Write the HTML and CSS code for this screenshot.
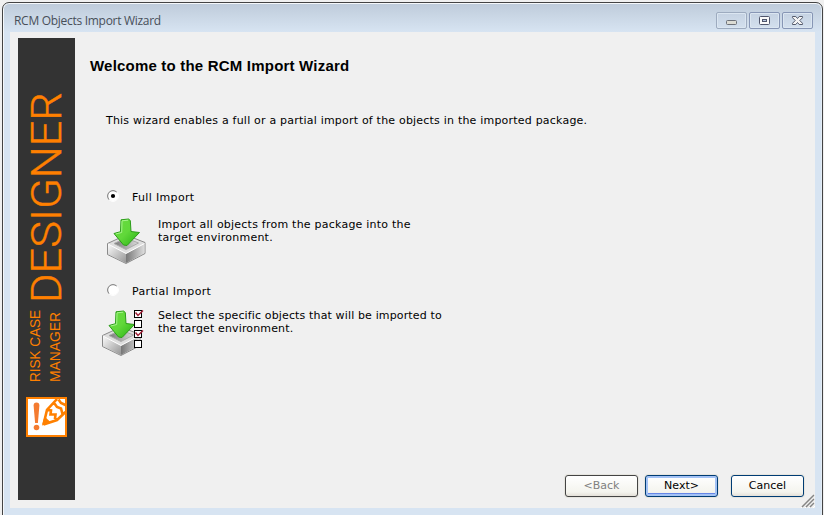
FILE: index.html
```html
<!DOCTYPE html>
<html lang="en">
<head>
<meta charset="utf-8">
<title>RCM Objects Import Wizard</title>
<link rel="stylesheet" href="styles.css">
</head>
<body>
<div class="window">
  <header class="titlebar">
    <span class="caption">RCM Objects Import Wizard</span>
    <div class="controls">
      <span class="control dim"><svg width="29" height="15" viewBox="0 0 29 15"><rect x="9.500" y="7.500" width="10" height="4" rx="1" fill="#dcdcd4" stroke="#6c7078"/></svg></span>
      <span class="control"><svg width="29" height="15" viewBox="0 0 29 15"><rect x="9.500" y="3.500" width="10" height="8" rx="1" fill="#fafafa" stroke="#50566c"/><rect x="12.500" y="6.500" width="4" height="2" fill="#b8c8e0" stroke="#50566c"/></svg></span>
      <span class="control"><svg width="29" height="15" viewBox="0 0 29 15"><path d="M9.500 3.500h3.300l1.700 2 1.700-2h3.300v1.200l-2.700 2.800 2.700 2.800v1.200h-3.300l-1.700-2-1.700 2H9.500v-1.200l2.700-2.800-2.700-2.800z" fill="#f4f4f4" stroke="#555b6c"/></svg></span>
    </div>
  </header>
  <main class="client">
    <aside class="sidebar">
      <svg width="57" height="462" viewBox="0 0 57 462">
        <g fill="#ff8000">
          <text class="brand" transform="translate(43 265) rotate(-90)" textLength="211" lengthAdjust="spacingAndGlyphs">DESIGNER</text>
          <text class="product" transform="translate(22 344) rotate(-90)" textLength="72" lengthAdjust="spacingAndGlyphs">RISK CASE</text>
          <text class="product" transform="translate(42 344) rotate(-90)" textLength="70" lengthAdjust="spacingAndGlyphs">MANAGER</text>
        </g>
        <rect x="9" y="360" width="39" height="38" fill="#fff" stroke="#ff8000" stroke-width="2"/>
        <path d="M15.600 367.500q0-3 2.900-3t2.900 3l-1.500 17.500h-2.800z" fill="#f47b30"/>
        <circle cx="18.500" cy="389.500" r="2.800" fill="#f47b30"/>
        <path d="M25.500 386.500L29 372l10-11M25.500 386.500L39 382l8.500-8M29 372l4 .5-.5 4 5 0-.5 4 2.500 1M36.500 365.500l2.500 3.500 4 1.500 1.500 5.500M40.500 361.500l2.500 3.500 4.500 2" fill="none" stroke="#ff8000" stroke-width="2.600"/>
        <path d="M24 387.500l2.500-9 6.500 6z" fill="#ff8000"/>
      </svg>
    </aside>
    <section class="page">
      <h1>Welcome to the RCM Import Wizard</h1>
      <p class="intro">This wizard enables a full or a partial import of the objects in the imported package.</p>
      <div class="option full">
        <label class="choice"><svg class="radio" width="12" height="12" viewBox="0 0 12 12"><circle cx="6" cy="6" r="5" fill="#fff"/><path d="M2.200 9.800A5.300 5.300 0 0 1 9.800 2.200" fill="none" stroke="#777"/><path d="M9.800 2.200A5.300 5.300 0 0 1 2.200 9.800" fill="none" stroke="#fff"/><circle cx="6" cy="6" r="2.100" fill="#000"/></svg><span>Full Import</span></label>
        <div class="detail">
          <svg class="art" width="42" height="48" viewBox="0 0 42 48">
            <defs>
              <linearGradient id="green" x1="0" y1="0" x2="1" y2="1"><stop offset="0" stop-color="#68dc40"/><stop offset=".5" stop-color="#61d83a"/><stop offset="1" stop-color="#26b112"/></linearGradient>
              <linearGradient id="metal"><stop offset="0" stop-color="#777"/><stop offset="1" stop-color="#ddd"/></linearGradient>
              <linearGradient id="side" x1="0" y1="0" x2="1" y2="1"><stop offset="0" stop-color="#fafafa"/><stop offset="1" stop-color="#959595"/></linearGradient>
              <g id="package">
                <path d="M1.500 25.500L20 17l19 7.500v11L20 45.500l-18.500-9z" fill="#dedede" stroke="#8a8a8a" stroke-linejoin="round"/>
                <path d="M2 26.500L20 35.500V45L2 36z" fill="url(#side)"/>
                <path d="M20 35.500L38.500 26v9L20 45z" fill="url(#metal)"/>
                <path d="M8 25.500l12-5.500 12.500 5L20 31.500z" fill="url(#metal)" stroke="#aaa"/>
                <path d="M2 26L20 35.500 38.500 25.500" fill="none" stroke="#fff"/>
                <path d="M15 1.800l7.500-.8 1.800 1.500.7 11 8.500 1L21 27.500 17.500 27 8 15.500l6.500-1.800z" fill="url(#green)" stroke="#2c9c1a" stroke-linejoin="round"/>
                <path d="M16 2.800l6-.6M16 3l-.3 11.500-6 1.500" fill="none" stroke="#a6f58b"/>
              </g>
            </defs>
            <use href="#package"/>
          </svg>
          <p>Import all objects from the package into the<br>target environment.</p>
        </div>
      </div>
      <div class="option partial">
        <label class="choice"><svg class="radio" width="12" height="12" viewBox="0 0 12 12"><circle cx="6" cy="6" r="5" fill="#fff"/><path d="M2.200 9.800A5.300 5.300 0 0 1 9.800 2.200" fill="none" stroke="#777"/><path d="M9.800 2.200A5.300 5.300 0 0 1 2.200 9.800" fill="none" stroke="#fff"/></svg><span>Partial Import</span></label>
        <div class="detail">
          <svg class="art" width="46" height="46" viewBox="0 0 46 46">
            <use href="#package"/>
            <g fill="#fff" stroke="#000"><rect x="33.500" y=".5" width="7" height="7"/><rect x="33.500" y="10.500" width="7" height="7"/><rect x="33.500" y="20.500" width="7" height="7"/><rect x="33.500" y="30.500" width="7" height="7"/></g>
            <path d="M34.500 2.500l2.500 3 5-5M34.500 22.500l2.500 3 5-5" fill="none" stroke="#a02038" stroke-width="1.500"/>
          </svg>
          <p>Select the specific objects that will be imported to<br>the target environment.</p>
        </div>
      </div>
      <footer class="actions">
        <button class="back" disabled>&lt;Back</button>
        <button class="next">Next&gt;</button>
        <button class="cancel">Cancel</button>
      </footer>
    </section>
    <svg class="grip" width="14" height="14" viewBox="0 0 14 14"><path d="M0 14L14 1M4 14L14 5M8 14L14 9M12 14l2-2" stroke="#fff" stroke-width="1"/><path d="M1 13L13 1M5 13l8-8M9 13l4-4" stroke="#858585" stroke-width="1.500"/></svg>
  </main>
</div>
</body>
</html>
```
FILE: styles.css
```css
* { box-sizing: border-box; }
body { margin: 0; height: 515px; padding: 2px 1px 0 2px; overflow: hidden; background: #f0f0f0; font: 11px/13px "DejaVu Sans", sans-serif; color: #000; }
h1, p { margin: 0; }
svg { display: block; flex: none; }
.window { height: 520px; padding: 0 7px; border: 1px solid #444; border-radius: 7px 7px 0 0; background: linear-gradient(#becbda, #d7e4f2 29px); box-shadow: inset 0 1px #f5f8fb, inset 1px 0 #f5f8fb, inset -1px 0 #e4edf6; }
.titlebar { height: 29px; display: flex; justify-content: space-between; padding: 0 2px 0 4px; }
.caption { padding-top: 10px; font: 12px/16px "Open Sans", sans-serif; color: #484f59; white-space: nowrap; letter-spacing: -.29px; }
.controls { display: flex; gap: 2px; padding-top: 9px; }
.control { width: 31px; height: 17px; border: 1px solid #8796b5; border-radius: 2px; background: linear-gradient(#c5d2e2, #d3e0ee); box-shadow: inset 0 0 0 1px #dbe6f1; }
.dim { border-color: #9dabbf; }
.client { position: relative; height: 476px; display: flex; padding: 6px 0 8px 8px; background: #f0f0f0; }
.sidebar { width: 57px; height: 462px; background: #333; }
.brand { font: 300 42px Roboto, sans-serif; stroke: #ff8000; stroke-width: .4px; }
.product { font: 15px "Liberation Sans", sans-serif; }
.page { flex: 1; display: flex; flex-direction: column; }
h1 { margin: 19px 0 0 15px; font: bold 15px/18px "Liberation Sans", sans-serif; letter-spacing: .2px; white-space: nowrap; }
.intro { margin: 39px 0 0 31px; white-space: nowrap; letter-spacing: .205px; }
.full { margin-top: 64px; }
.partial { margin-top: 21px; }
.choice { display: flex; gap: 13px; padding-left: 32px; letter-spacing: .33px; }
.radio { margin-top: -1px; }
.detail { display: flex; height: 46px; margin-top: 14px; padding-left: 31px; }
.detail p { width: 320px; white-space: nowrap; letter-spacing: .23px; }
.full .detail p { margin-left: 10px; }
.partial .detail { margin-top: 11px; padding-left: 26px; }
.partial .detail p { margin-left: 11px; letter-spacing: .14px; }
.partial .art { margin-top: 1px; }
.actions { display: flex; margin: auto 11px 3px auto; }
button { width: 73px; height: 22px; padding: 0 0 2px; border: 1px solid #003c74; border-radius: 3px; background: linear-gradient(#fff, #f4f4ee 80%, #e4e0d8); font: 11px/13px "DejaVu Sans", sans-serif; color: #000; box-shadow: 0 0 0 1px #e6e5df; }
.back { border-color: #444; color: #808080; }
.next { margin: 0 13px 0 7px; box-shadow: inset 0 0 0 2px #a3c2f5, inset 0 -3px #6686e8, 0 0 0 1px #e6e5df; }
.grip { position: absolute; right: 0; bottom: 0; }
```
